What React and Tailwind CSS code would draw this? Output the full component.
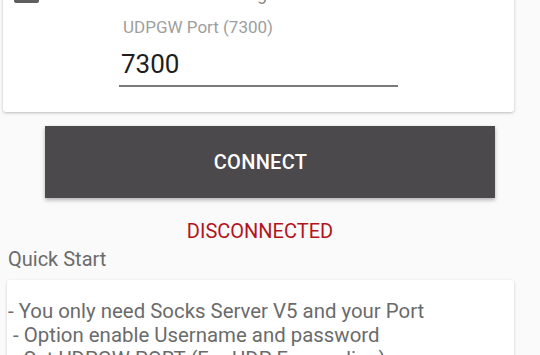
import React from "react";

const App = () => {
  return (
    <div className="w-[540px] h-[355px] overflow-hidden bg-[#fafafa] font-['Roboto',sans-serif]">
      {/* Settings card (top cut off) */}
      <div className="ml-[3px] w-[511px] h-[143px] -mt-[31px] bg-white rounded-[3px] shadow-[0_1px_3px_rgba(0,0,0,0.25)] flex flex-col">
        <div className="flex items-center gap-3 pl-[11px] pt-[14px]">
          <div className="w-[25px] h-[18px] rounded-[2px] bg-[#5f5f5f]" />
          <span className="text-[18px] leading-[22px] text-[#8a8a8a]">Enable UDPGW Forwarding</span>
        </div>
        <div className="pl-[116px] pt-[12px]">
          <div className="pl-[4px] text-[17px] leading-[20px] text-[#9e9e9e]">UDPGW Port (7300)</div>
          <div className="w-[279px] border-b-2 border-[#7a7a7a] pt-[11px] pb-[5px]">
            <span className="text-[26px] leading-[32px] text-[#1e1e1e] pl-[2px]">7300</span>
          </div>
        </div>
      </div>

      {/* Connect button */}
      <div className="flex justify-center mt-[14px]">
        <button className="w-[450px] h-[72px] pr-[19px] bg-[#4b494c] text-white text-[20px] font-medium tracking-[0.3px] shadow-[0_2px_4px_rgba(0,0,0,0.3)]">
          CONNECT
        </button>
      </div>

      {/* Status */}
      <div className="text-center pr-[20px] text-[20px] leading-[24px] text-[#b3141c] mt-[21px]">DISCONNECTED</div>

      {/* Quick start */}
      <div className="pl-[8px] text-[20px] leading-[24px] text-[#6b6b6b] mt-[4px]">Quick Start</div>
      <div className="ml-[7px] w-[507px] mt-[9px] bg-white rounded-[3px] shadow-[0_1px_3px_rgba(0,0,0,0.2)] pt-[19px] text-[20.4px] leading-[24px] text-[#6b6b6b] pl-[1px]">
        <div>- You only need Socks Server V5 and your Port</div>
        <div>&nbsp;- Option enable Username and password</div>
        <div>&nbsp;- Set UDPGW PORT (For UDP Forwarding)</div>
      </div>
    </div>
  );
};

export default App;
